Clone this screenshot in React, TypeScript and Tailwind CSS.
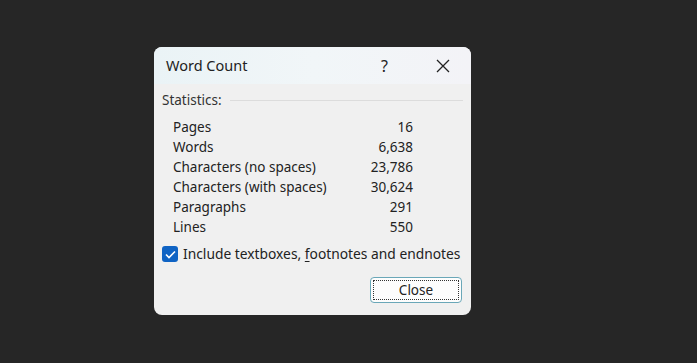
import React from 'react';

const stats = [
  { label: 'Pages', value: '16' },
  { label: 'Words', value: '6,638' },
  { label: 'Characters (no spaces)', value: '23,786' },
  { label: 'Characters (with spaces)', value: '30,624' },
  { label: 'Paragraphs', value: '291' },
  { label: 'Lines', value: '550' },
];

const App = () => {
  return (
    <div
      className="w-[697px] h-[363px] bg-[#262626] pl-[154px] pt-[47px]"
      style={{ fontFamily: '"Noto Sans", "Open Sans", sans-serif' }}
    >
      <div className="w-[317px] h-[268px] rounded-[8px] bg-[#f0f0f0] overflow-hidden flex flex-col text-[#1a1a1a]">
        {/* Title bar */}
        <div className="h-[37px] flex items-center bg-gradient-to-r from-[#eaf3f6] via-[#f1f6f8] to-[#f3f3f7] pl-[12px]">
          <span className="text-[14.5px] text-[#222]">Word Count</span>
          <span className="ml-auto mr-[48px] text-[16px] text-[#222]">?</span>
          <svg width="14" height="14" viewBox="0 0 14 14" className="mr-[21px]">
            <path d="M1 1 L13 13 M13 1 L1 13" stroke="#222" strokeWidth="1.3" />
          </svg>
        </div>

        {/* Body */}
        <div className="flex-1 px-[8px] pt-[8px] flex flex-col">
          <div className="flex items-center h-[16px]">
            <span className="text-[13.5px] text-[#333]">Statistics:</span>
            <div className="flex-1 h-px bg-[#dcdcdc] ml-[8px]" />
          </div>

          <div className="mt-[9px] pl-[11px] w-[251px]">
            {stats.map((s) => (
              <div key={s.label} className="flex justify-between items-center h-[20px] text-[13.5px] text-[#222]">
                <span>{s.label}</span>
                <span>{s.value}</span>
              </div>
            ))}
          </div>

          <div className="flex items-center mt-[7px]">
            <div className="w-[16px] h-[16px] rounded-[3px] bg-[#0f63c4] flex items-center justify-center">
              <svg width="11" height="9" viewBox="0 0 11 9">
                <path d="M1 4.5 L4 7.5 L10 1.5" stroke="white" strokeWidth="1.6" fill="none" />
              </svg>
            </div>
            <span className="ml-[5px] text-[13.8px] text-[#222]">
              Include textboxes, <span className="underline underline-offset-2">f</span>ootnotes and endnotes
            </span>
          </div>

          <div className="flex justify-end mt-[12px] pr-[1px]">
            <button className="w-[92px] h-[26px] rounded-[4px] border border-[#6aa7b8] bg-[#fdfdfd] p-[2px]">
              <div className="w-full h-full border border-dotted border-[#333] flex items-center justify-center text-[13.5px] text-[#222]">
                Close
              </div>
            </button>
          </div>
        </div>
      </div>
    </div>
  );
};

export default App;
